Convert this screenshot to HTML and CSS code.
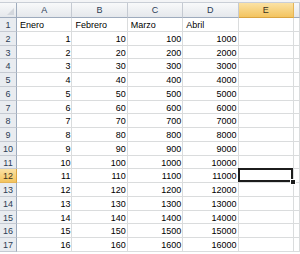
FILE: index.html
```html
<!DOCTYPE html>
<html lang="es">
<head>
    <meta charset="UTF-8">
    <title>Hoja1</title>
    <link rel="stylesheet" href="styles.css">
</head>
<body>
<div class="topbar"></div>
<div class="sheet">
    <div class="row head">
        <div class="corner">
            <svg width="7" height="7" viewBox="0 0 7 7"><polygon points="7,0 7,7 0,7" fill="#d3d7dd"/></svg>
        </div>
        <div class="ch">A</div>
        <div class="ch">B</div>
        <div class="ch">C</div>
        <div class="ch">D</div>
        <div class="ch sel">E</div>
        <div class="ch"></div>
    </div>
    <div class="row">
        <div class="rh">1</div>
        <div class="c">Enero</div>
        <div class="c">Febrero</div>
        <div class="c">Marzo</div>
        <div class="c">Abril</div>
        <div class="c"></div>
        <div class="c"></div>
    </div>
    <div class="row"><div class="rh">2</div><div class="c n">1</div><div class="c n">10</div><div class="c n">100</div><div class="c n">1000</div><div class="c"></div><div class="c"></div></div>
    <div class="row"><div class="rh">3</div><div class="c n">2</div><div class="c n">20</div><div class="c n">200</div><div class="c n">2000</div><div class="c"></div><div class="c"></div></div>
    <div class="row"><div class="rh">4</div><div class="c n">3</div><div class="c n">30</div><div class="c n">300</div><div class="c n">3000</div><div class="c"></div><div class="c"></div></div>
    <div class="row"><div class="rh">5</div><div class="c n">4</div><div class="c n">40</div><div class="c n">400</div><div class="c n">4000</div><div class="c"></div><div class="c"></div></div>
    <div class="row"><div class="rh">6</div><div class="c n">5</div><div class="c n">50</div><div class="c n">500</div><div class="c n">5000</div><div class="c"></div><div class="c"></div></div>
    <div class="row"><div class="rh">7</div><div class="c n">6</div><div class="c n">60</div><div class="c n">600</div><div class="c n">6000</div><div class="c"></div><div class="c"></div></div>
    <div class="row"><div class="rh">8</div><div class="c n">7</div><div class="c n">70</div><div class="c n">700</div><div class="c n">7000</div><div class="c"></div><div class="c"></div></div>
    <div class="row"><div class="rh">9</div><div class="c n">8</div><div class="c n">80</div><div class="c n">800</div><div class="c n">8000</div><div class="c"></div><div class="c"></div></div>
    <div class="row"><div class="rh">10</div><div class="c n">9</div><div class="c n">90</div><div class="c n">900</div><div class="c n">9000</div><div class="c"></div><div class="c"></div></div>
    <div class="row"><div class="rh">11</div><div class="c n">10</div><div class="c n">100</div><div class="c n">1000</div><div class="c n">10000</div><div class="c"></div><div class="c"></div></div>
    <div class="row"><div class="rh sel">12</div><div class="c n">11</div><div class="c n">110</div><div class="c n">1100</div><div class="c n">11000</div><div class="c active"></div><div class="c"></div></div>
    <div class="row"><div class="rh">13</div><div class="c n">12</div><div class="c n">120</div><div class="c n">1200</div><div class="c n">12000</div><div class="c"></div><div class="c"></div></div>
    <div class="row"><div class="rh">14</div><div class="c n">13</div><div class="c n">130</div><div class="c n">1300</div><div class="c n">13000</div><div class="c"></div><div class="c"></div></div>
    <div class="row"><div class="rh">15</div><div class="c n">14</div><div class="c n">140</div><div class="c n">1400</div><div class="c n">14000</div><div class="c"></div><div class="c"></div></div>
    <div class="row"><div class="rh">16</div><div class="c n">15</div><div class="c n">150</div><div class="c n">1500</div><div class="c n">15000</div><div class="c"></div><div class="c"></div></div>
    <div class="row"><div class="rh">17</div><div class="c n">16</div><div class="c n">160</div><div class="c n">1600</div><div class="c n">16000</div><div class="c"></div><div class="c"></div></div>
</div>
</body>
</html>
```

FILE: styles.css
```css
body {
    margin: 0;
    background-color: #fff;
    font-family: "Liberation Sans", Arial, sans-serif;
    font-size: 9px;
    color: #000;
    overflow: hidden;
}
.topbar {
    height: 2px;
    background-color: #f3f4f6;
    border-bottom: 1px solid #c9ced6;
}
.sheet {
    display: flex;
    flex-direction: column;
}
.row {
    display: grid;
    grid-template-columns: 17px repeat(5, 55.4px) 1fr;
    height: 13.75px;
}
.row.head {
    height: 15px;
}
.c, .rh, .ch, .corner {
    box-sizing: border-box;
    border-right: 1px solid #dadcdd;
    border-bottom: 1px solid #dadcdd;
    line-height: 12px;
    padding-top: 1px;
    white-space: nowrap;
    overflow: hidden;
}
.c {
    padding-left: 3px;
    padding-right: 1px;
}
.c.n {
    text-align: right;
}
.ch, .rh, .corner {
    background: linear-gradient(#f8f9fa, #e5e8ec);
    border-color: #c5cad2;
    color: #2c3c55;
    text-align: center;
}
.ch {
    line-height: 14px;
    padding-top: 0;
    border-bottom-color: #9eabbd;
}
.rh {
    background: #e9ecf0;
    border-right-color: #9eabbd;
}
.corner {
    display: flex;
    align-items: flex-end;
    justify-content: flex-end;
    padding: 0 2px 2px 0;
    border-bottom-color: #9eabbd;
    border-right-color: #9eabbd;
}
.ch.sel, .rh.sel {
    background: linear-gradient(#fbe2a4, #f3c45f);
    border-color: #e5b557;
    color: #3a3320;
}
.ch.sel {
    border-bottom-color: #d9a441;
}
.rh.sel {
    border-right-color: #d9a441;
}
.c.active {
    position: relative;
    overflow: visible;
}
.c.active::before {
    content: "";
    position: absolute;
    left: -1px;
    top: -1px;
    right: 0;
    bottom: 0;
    border: 2px solid #1c1c1c;
}
.c.active::after {
    content: "";
    position: absolute;
    right: -3px;
    bottom: -3px;
    width: 4px;
    height: 4px;
    background: #1c1c1c;
    border: 1px solid #fff;
}
```
